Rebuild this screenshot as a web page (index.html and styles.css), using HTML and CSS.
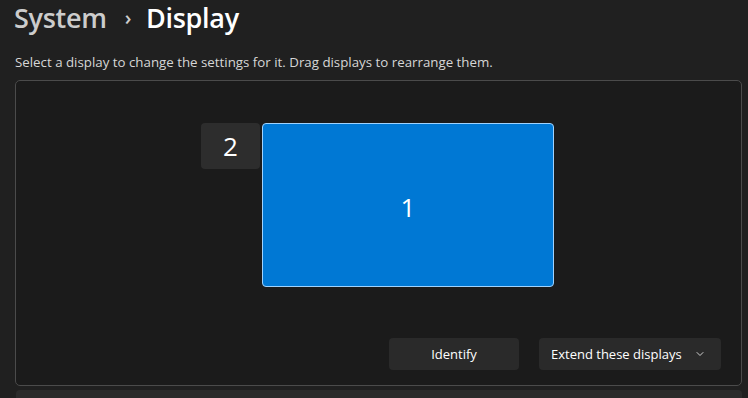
FILE: index.html
```html
<!DOCTYPE html>
<html lang="en">
<head>
    <meta charset="UTF-8">
    <title>Display</title>
    <link rel="stylesheet" href="styles.css">
</head>
<body>
    <div class="header">
        <h1 class="crumbs"><span class="parent">System</span><span class="sep">&#8250;</span><span class="current">Display</span></h1>
        <p class="hint">Select a display to change the settings for it. Drag displays to rearrange them.</p>
    </div>

    <div class="arrange">
        <div class="canvas">
            <div class="monitor small">2</div>
            <div class="monitor main">1</div>
        </div>
        <div class="actions">
            <button class="btn identify">Identify</button>
            <button class="btn dropdown">Extend these displays
                <svg width="10" height="10" viewBox="0 0 10 10"><path d="M2 3.5 L5 6.5 L8 3.5" fill="none" stroke="#cfcfcf" stroke-width="1" stroke-linecap="round" stroke-linejoin="round"/></svg>
            </button>
        </div>
    </div>

    <div class="next-card"></div>
</body>
</html>
```

FILE: styles.css
```css
body {
    margin: 0;
    background-color: #202020;
    font-family: "Open Sans", "Noto Sans", sans-serif;
    color: #ffffff;
    overflow: hidden;
}
.header {
    padding-left: 14px;
}
.crumbs {
    margin: 0;
    font-size: 27px;
    font-weight: 600;
    line-height: 36px;
    letter-spacing: -0.3px;
}
.crumbs .parent {
    color: #cccccc;
}
.crumbs .sep {
    color: #cccccc;
    font-size: 20px;
    margin: 0 15px 0 18px;
    position: relative;
    top: -3px;
}
.hint {
    margin: 14px 0 0 1px;
    font-size: 13.3px;
    line-height: 18px;
    color: #d6d6d6;
}
.arrange {
    margin: 9px 6px 0 15px;
    height: 304px;
    background-color: #1b1b1b;
    border: 1px solid #4b4b4b;
    border-radius: 5px;
    display: flex;
    flex-direction: column;
}
.canvas {
    position: relative;
    flex: 1;
}
.monitor {
    position: absolute;
    top: 42px;
    display: flex;
    align-items: center;
    justify-content: center;
    border-radius: 4px;
    font-size: 26px;
    color: #ffffff;
}
.monitor.main {
    left: 246px;
    width: 290px;
    height: 159px;
    padding-top: 3px;
    background-color: #0078d4;
    border: 1px solid #9fd3ff;
}
.monitor.small {
    left: 185px;
    width: 59px;
    height: 46px;
    background-color: #2d2d2d;
}
.actions {
    display: flex;
    justify-content: flex-end;
    gap: 20px;
    padding: 0 20px 15px 0;
}
.btn {
    height: 32px;
    border: none;
    border-radius: 4px;
    background-color: #2a2a2a;
    color: #ffffff;
    font-family: inherit;
    font-size: 13px;
}
.identify {
    width: 130px;
}
.dropdown {
    width: 182px;
    display: flex;
    align-items: center;
    justify-content: space-between;
    padding: 0 16px 0 12px;
}
.next-card {
    margin: 4px 6px 0 16px;
    height: 8px;
    background-color: #2b2b2b;
    border-radius: 4px 4px 0 0;
}
```
